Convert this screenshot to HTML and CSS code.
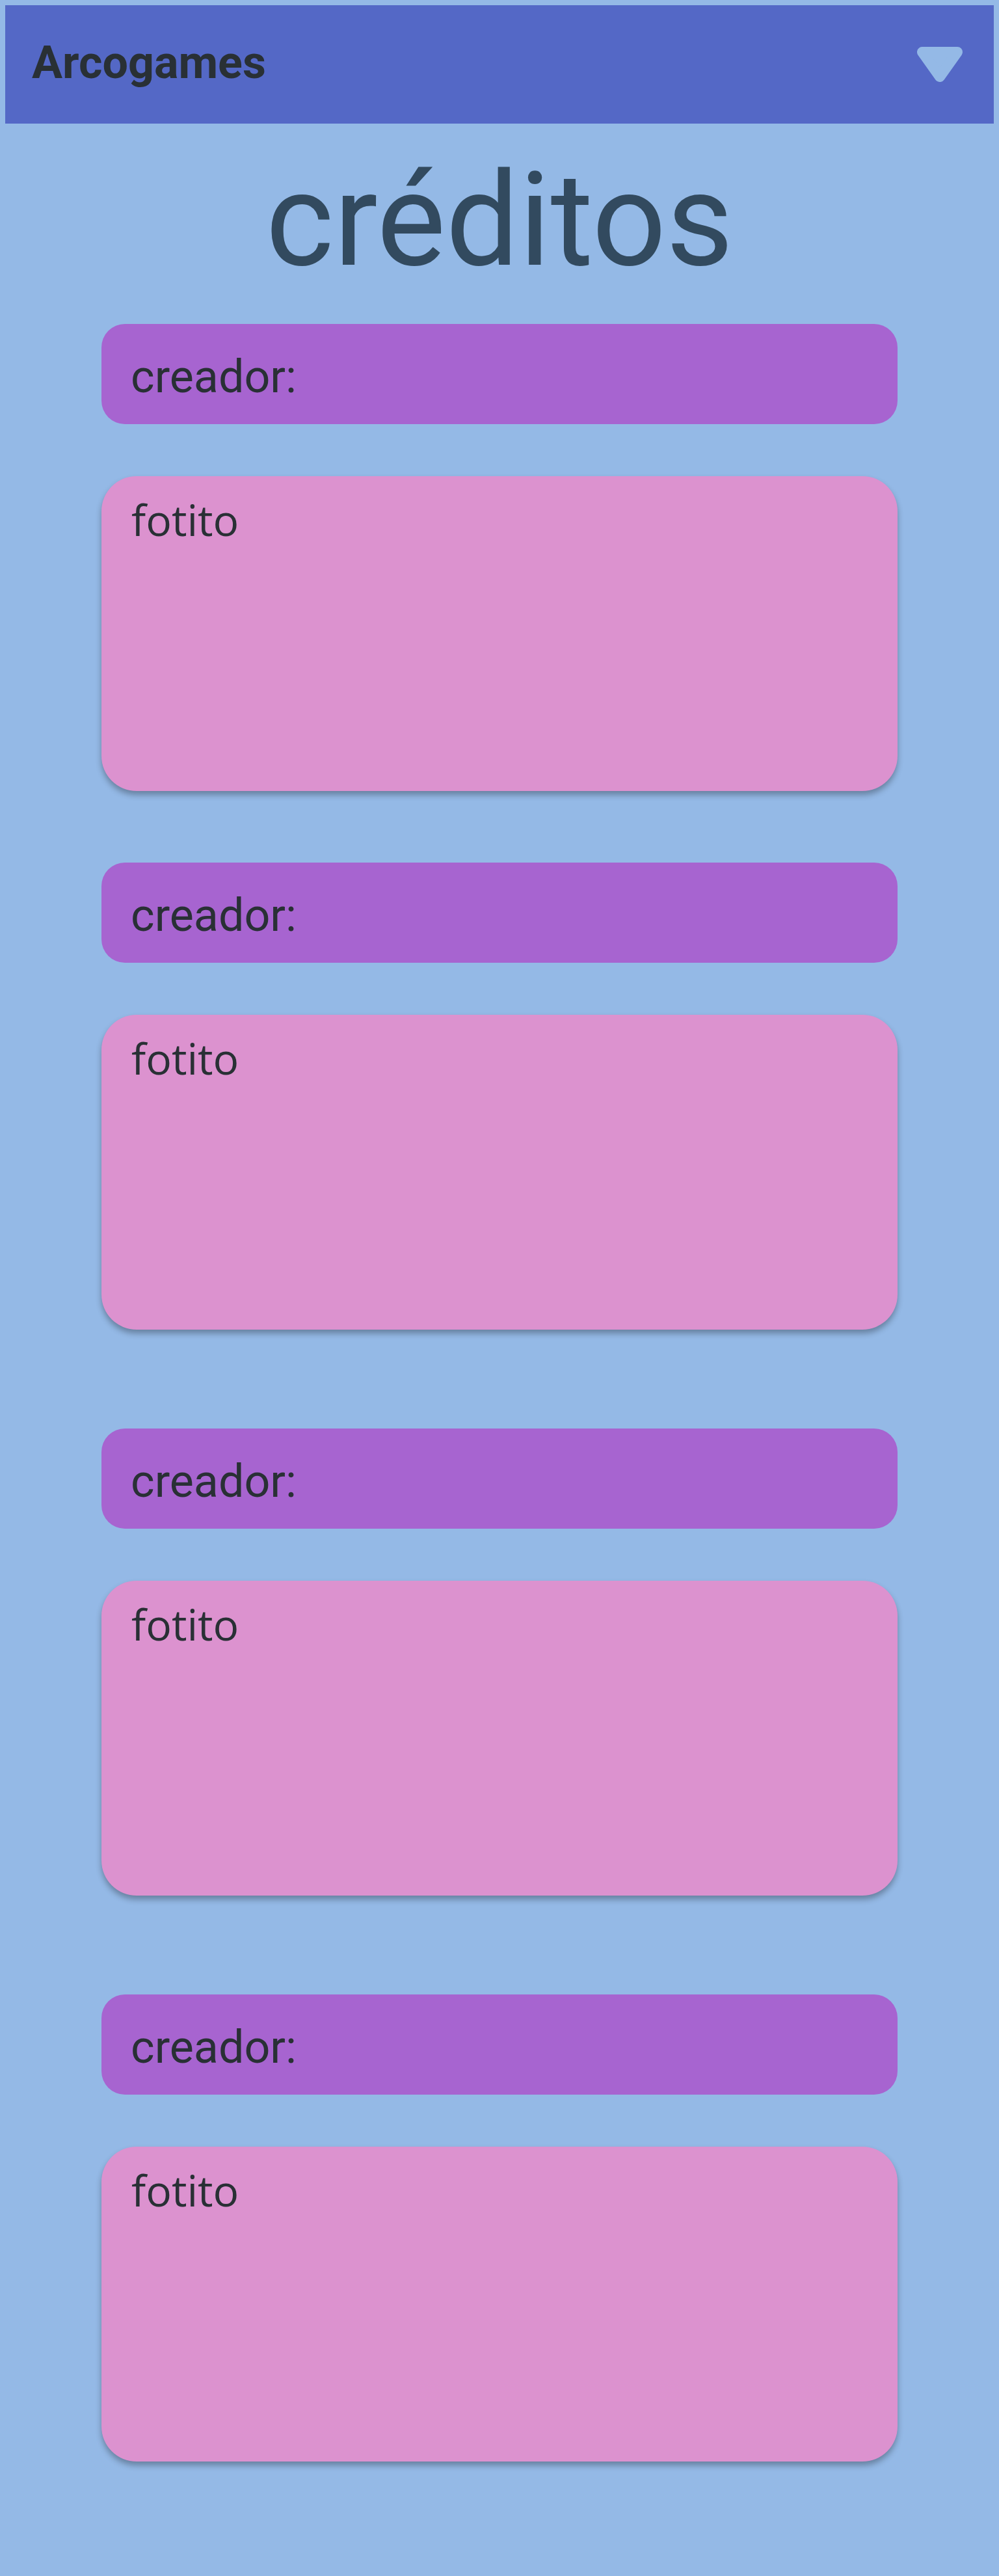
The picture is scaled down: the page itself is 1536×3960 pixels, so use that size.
FILE: index.html
```html
<!DOCTYPE html>
<html lang="es">
<head>
<meta charset="utf-8">
<title>créditos - Arcogames</title>
<link rel="stylesheet" href="styles.css">
</head>
<body>
<header class="topbar">
  <span class="brand">Arcogames</span>
  <svg class="menu-toggle" width="70" height="54" viewBox="0 0 70 54" aria-hidden="true">
    <polygon points="8,8 62,8 35,46" fill="#94b9e6" stroke="#94b9e6" stroke-width="16" stroke-linejoin="round"/>
  </svg>
</header>
<main class="credits">
  <h1 class="title">créditos</h1>
  <section class="credit credit-first">
    <div class="creator">creador:</div>
    <div class="photo">fotito</div>
  </section>
  <section class="credit">
    <div class="creator">creador:</div>
    <div class="photo">fotito</div>
  </section>
  <section class="credit">
    <div class="creator">creador:</div>
    <div class="photo">fotito</div>
  </section>
  <section class="credit credit-last">
    <div class="creator">creador:</div>
    <div class="photo">fotito</div>
  </section>
</main>
</body>
</html>
```

FILE: styles.css
```css
html {
  background: #94b9e6;
}

body {
  margin: 8px;
  background: #94b9e6;
  color: #293035;
  font-family: Roboto, "Liberation Sans", sans-serif;
}

.topbar {
  box-sizing: border-box;
  height: 182px;
  background: #5468c6;
  display: flex;
  align-items: center;
  justify-content: space-between;
  padding: 0 48px 6px 41px;
}

.brand {
  font-family: Roboto, "Liberation Sans", sans-serif;
  font-weight: 700;
  font-size: 70px;
  line-height: 82px;
  color: #293035;
}

.menu-toggle {
  display: block;
  margin-top: 6px;
}

.credits {
  display: flex;
  flex-direction: column;
  align-items: center;
  padding-bottom: 168px;
}

.title {
  margin: 32px 0 42px;
  font-family: Roboto, "Liberation Sans", sans-serif;
  font-weight: 400;
  font-size: 200px;
  line-height: 234px;
  color: #324a5f;
  text-align: center;
}

.credit {
  width: 1224px;
  display: flex;
  flex-direction: column;
  gap: 80px;
  margin-bottom: 152px;
}

.credit-first {
  margin-bottom: 110px;
}

.credit-last {
  margin-bottom: 0;
}

.creator {
  box-sizing: border-box;
  height: 154px;
  padding: 39px 45px 31px;
  background: #a764d0;
  border-radius: 36px;
  font-family: Roboto, "Liberation Sans", sans-serif;
  font-size: 70px;
  line-height: 84px;
  color: #293035;
}

.photo {
  box-sizing: border-box;
  height: 484px;
  padding: 21px 46px;
  background: #dc92cf;
  border-radius: 54px;
  box-shadow: 0 6px 10px rgba(0, 0, 0, 0.3);
  font-family: "Open Sans", "Noto Sans", sans-serif;
  font-size: 66px;
  line-height: 90px;
  color: #293035;
}
```
